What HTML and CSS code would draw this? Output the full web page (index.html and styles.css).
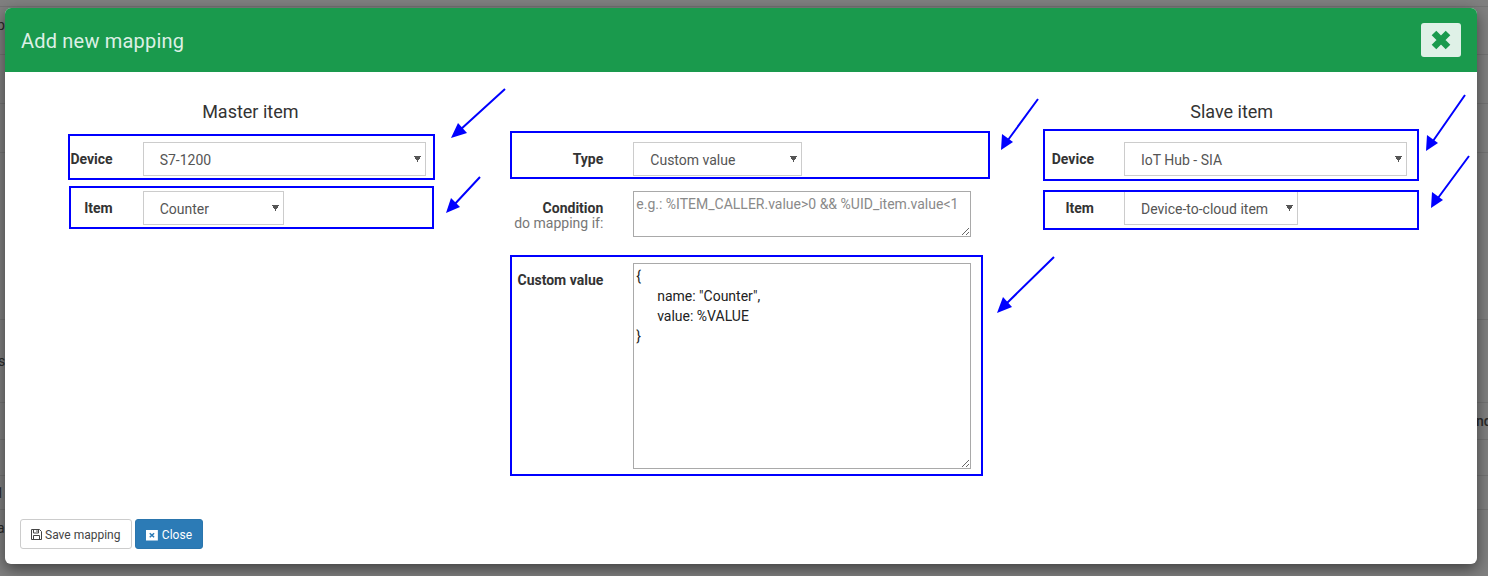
FILE: index.html
```html
<!DOCTYPE html>
<html lang="en">
<head>
  <meta charset="UTF-8">
  <title>Add new mapping</title>
  <link rel="stylesheet" href="styles.css">
</head>
<body>

<div class="behind">
  <div class="behind-row h-7"></div>
  <div class="behind-row h-48"><span class="frag frag-p">p</span></div>
  <div class="behind-row h-49"></div>
  <div class="behind-row h-49"></div>
  <div class="behind-row h-167"></div>
  <div class="behind-row h-83"><span class="frag frag-s">s</span></div>
  <div class="behind-row h-37"><span class="frag frag-nd">nd</span></div>
  <div class="behind-row h-36"></div>
  <div class="behind-row h-34"><span class="frag frag-t">1</span></div>
  <div class="behind-row h-66"><span class="frag frag-a">a</span></div>
</div>

<div class="modal">
  <div class="modal-header">
    <span class="modal-title">Add new mapping</span>
    <button class="btn-x" type="button">
      <svg width="20" height="20" viewBox="0 0 20 20"><path d="M3 3 17 17M17 3 3 17"/></svg>
    </button>
  </div>

  <div class="modal-body">
    <div class="col">
      <h4>Master item</h4>
      <div class="form-group">
        <label>Device</label>
        <div><select class="w-wide"><option>S7-1200</option></select></div>
      </div>
      <div class="form-group">
        <label>Item</label>
        <div><select class="w-item"><option>Counter</option></select></div>
      </div>
    </div>

    <div class="col col-middle">
      <div class="form-group">
        <label>Type</label>
        <div><select class="w-type"><option>Custom value</option></select></div>
      </div>
      <div class="form-group group-condition">
        <label class="label-tight">Condition<small>do mapping if:</small></label>
        <div><textarea class="area-condition" placeholder="e.g.: %ITEM_CALLER.value&gt;0 &amp;&amp; %UID_item.value&lt;1"></textarea></div>
      </div>
      <div class="form-group">
        <label>Custom value</label>
        <div><textarea class="area-value">{
      name: "Counter",
      value: %VALUE
}</textarea></div>
      </div>
    </div>

    <div class="col">
      <h4>Slave item</h4>
      <div class="form-group">
        <label>Device</label>
        <div><select class="w-wide"><option>IoT Hub - SIA</option></select></div>
      </div>
      <div class="form-group">
        <label>Item</label>
        <div><select class="w-cloud"><option>Device-to-cloud item</option></select></div>
      </div>
    </div>
  </div>

  <div class="modal-footer">
    <button class="btn btn-default" type="button">
      <svg width="11" height="11" viewBox="0 0 11 11"><path d="M1 .5h7.500L10.500 2.500v8H.5V.5Z M2.500 .5v3.500h5V.5 M6 1.200v1.800 M2.500 10.500V6.500h6v4" fill="none" stroke="#444" stroke-width="1"/></svg>
      <span>Save mapping</span>
    </button>
    <button class="btn btn-primary" type="button">
      <svg width="12" height="12" viewBox="0 0 12 12"><path fill-rule="evenodd" d="M0 1h12v10.500H0Z M4.300 3.700 3.300 4.700 4.900 6.250 3.300 7.800 4.300 8.800 6 7.200 7.700 8.800 8.700 7.800 7.100 6.250 8.700 4.700 7.700 3.700 6 5.300Z" fill="#fff"/></svg>
      <span>Close</span>
    </button>
  </div>
</div>

<!-- blue annotations drawn on top of the screenshot -->
<svg class="notes" width="1488" height="576" viewBox="0 0 1488 576">
  <g fill="none" stroke="#0000ff" stroke-width="2">
    <rect x="69" y="135" width="365" height="44"/>
    <rect x="70" y="187" width="363" height="41"/>
    <rect x="511" y="132" width="478" height="46"/>
    <rect x="511" y="256" width="471" height="219"/>
    <rect x="1044" y="130" width="374" height="50"/>
    <rect x="1044" y="191" width="374" height="38"/>
    <path d="M505 89 460 130M480 177 453 206M1038 99 1008 140M1054 257 1006 304M1465 95 1433 141M1469 156 1438 198"/>
  </g>
  <g fill="#0000ff">
    <path d="M451 138 458 123 467 133Z"/>
    <path d="M446 213 451 198 460 207Z"/>
    <path d="M1001 150 1002 134 1013 142Z"/>
    <path d="M997 313 1003 297 1012 307Z"/>
    <path d="M1426 151 1427 135 1438 143Z"/>
    <path d="M1431 208 1432 192 1443 200Z"/>
  </g>
</svg>

</body>
</html>
```

FILE: styles.css
```css
html, body {
  margin: 0;
  padding: 0;
  height: 576px;
  overflow: hidden;
}
body {
  font-family: Roboto, "Liberation Sans", sans-serif;
  font-size: 14px;
  color: #333;
  background: #808080;
}

/* page dimmed behind the modal */
.behind-row {
  border-bottom: 1px solid #747474;
  box-sizing: border-box;
}
.h-7 { height: 7px; }
.h-48 { height: 48px; }
.h-49 { height: 49px; }
.h-167 { height: 167px; }
.h-83 { height: 83px; }
.h-37 { height: 37px; }
.h-36 { height: 36px; }
.h-34 { height: 34px; }
.h-66 { height: 66px; border-bottom: 0; }
.frag {
  position: absolute;
  color: #2a2a2a;
  font-size: 14px;
  line-height: 16px;
}
.frag-p { left: -3px; top: 17px; }
.frag-s { left: -2px; top: 353px; }
.frag-nd { left: 1476px; top: 413px; font-weight: 500; }
.frag-t { left: -4px; top: 485px; }
.frag-a { left: -3px; top: 520px; }

.modal {
  position: absolute;
  left: 5px;
  top: 8px;
  width: 1472px;
  height: 556px;
  display: flex;
  flex-direction: column;
  background: #fff;
  border-radius: 6px;
  box-shadow: 0 5px 15px rgba(0,0,0,0.5);
  overflow: hidden;
}
.modal-header {
  height: 64px;
  flex: none;
  background: #1a9a4d;
  display: flex;
  align-items: center;
  justify-content: space-between;
  padding: 0 16px;
  box-sizing: border-box;
}
.modal-title {
  font-size: 20px;
  letter-spacing: 0.2px;
  color: #ddf0e5;
  padding-top: 2px;
}
.btn-x {
  width: 40px;
  height: 34px;
  margin-top: -1px;
  border: 0;
  border-radius: 3px;
  background: #dff1e7;
  display: flex;
  align-items: center;
  justify-content: center;
  padding: 0;
}
.btn-x svg {
  fill: none;
  stroke: #1a9a4d;
  stroke-width: 6.5;
}

.modal-body {
  display: grid;
  grid-template-columns: repeat(3, 1fr);
  padding-top: 30px;
}
.col h4 {
  margin: 0 0 20px;
  font-size: 18px;
  font-weight: 400;
  line-height: 20px;
  text-align: center;
  color: #333;
}
.col-middle { padding-top: 40px; }
.form-group {
  display: grid;
  grid-template-columns: 25% 75%;
  margin-bottom: 15px;
}
.form-group label {
  padding: 7px 15px 0 0;
  text-align: right;
  font-weight: 700;
  line-height: 20px;
  box-sizing: border-box;
}
.form-group > div {
  padding: 0 15px;
  box-sizing: border-box;
}
.form-group .label-tight {
  padding-top: 10px;
  line-height: 15px;
}
.label-tight small {
  display: block;
  font-size: 14px;
  font-weight: 400;
  color: #777;
}
.group-condition { margin-bottom: 26px; }

select {
  display: block;
  height: 34px;
  padding: 7px 12px 5px 16px;
  font-family: inherit;
  font-size: 14px;
  color: #555;
  border: 1px solid #ccc;
  border-radius: 0;
  box-sizing: border-box;
  appearance: none;
  background: #fff conic-gradient(from -30deg at 50% 100%, #555 60deg, transparent 0) no-repeat right 4px top 13px / 7px 6px;
}
.w-wide { width: 283px; }
.w-item { width: 141px; }
.w-type { width: 169px; }
.w-cloud { width: 174px; }

textarea {
  display: block;
  width: 100%;
  padding: 2px;
  font-family: inherit;
  font-size: 14px;
  line-height: 20px;
  color: #222;
  border: 1px solid #a9a9a9;
  box-sizing: border-box;
  outline: 0;
}
textarea::placeholder { color: #8a8a8a; }
.area-condition { height: 46px; }
.area-value { height: 206px; }

.modal-footer {
  margin-top: auto;
  padding: 0 15px 15px;
  display: flex;
  gap: 3px;
}
.btn {
  height: 30px;
  padding: 1px 10px 0;
  font-family: inherit;
  font-size: 12px;
  border-radius: 3px;
  border: 1px solid #ccc;
  display: inline-flex;
  align-items: center;
  gap: 3px;
  box-sizing: border-box;
}
.btn-default {
  width: 112px;
  background: #fff;
  color: #444;
}
.btn-primary {
  width: 68px;
  gap: 4px;
  background: #2c7bb6;
  border-color: #2a75ad;
  color: #fff;
}

.notes {
  position: absolute;
  left: 0;
  top: 0;
  pointer-events: none;
}
```
